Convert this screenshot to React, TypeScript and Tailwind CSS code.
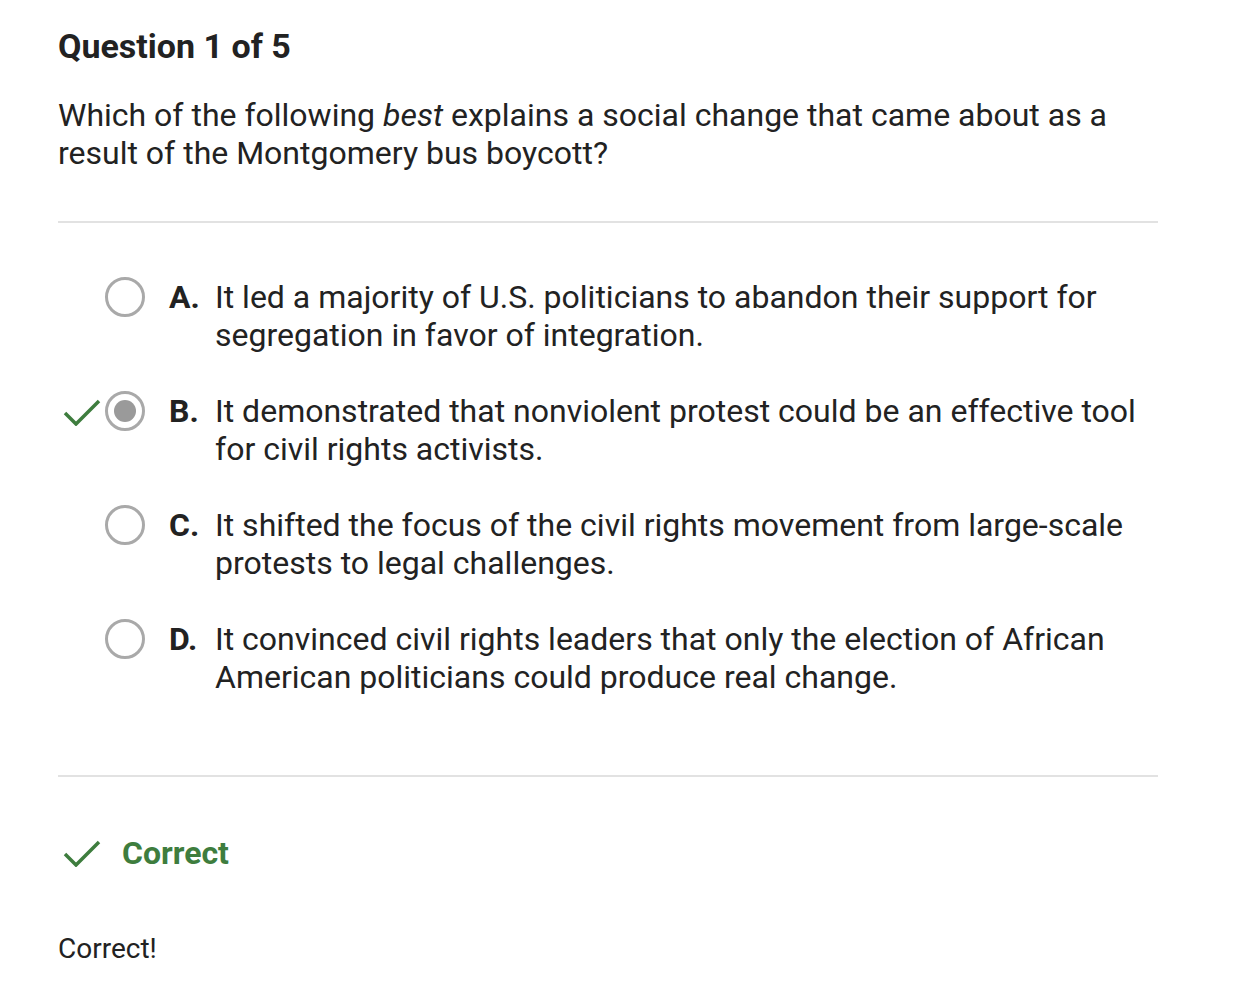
import React from "react"

type Option = {
  letter: string
  text: string
  selected?: boolean
  correct?: boolean
}

const OPTIONS: Option[] = [
  { letter: "A.", text: "It led a majority of U.S. politicians to abandon their support for segregation in favor of integration." },
  { letter: "B.", text: "It demonstrated that nonviolent protest could be an effective tool for civil rights activists.", selected: true, correct: true },
  { letter: "C.", text: "It shifted the focus of the civil rights movement from large-scale protests to legal challenges." },
  { letter: "D.", text: "It convinced civil rights leaders that only the election of African American politicians could produce real change." },
]

function Check({ className }: { className?: string }) {
  return (
    <svg viewBox="0 0 38 28" className={className} fill="none">
      <path d="M2 15 L13 26 L36 3" stroke="#3e7d3e" strokeWidth="3.5" />
    </svg>
  )
}

function Radio({ selected }: { selected?: boolean }) {
  return (
    <div className="flex h-[40px] w-[40px] shrink-0 items-center justify-center rounded-full border-[3px] border-[#a9a9a9] bg-white">
      {selected && <div className="h-[22px] w-[22px] rounded-full bg-[#9a9a9a]" />}
    </div>
  )
}

export default function App() {
  return (
    <div className="min-h-[990px] bg-white text-[#222] [font-family:Roboto,'Liberation_Sans',sans-serif]">
      <div className="w-[1158px] pl-[58px] pt-[26px]">
        <h1 className="text-[34px] font-bold leading-[40px]">Question 1 of 5</h1>
        <p className="mt-[30px] text-[32px] leading-[38px]">
          Which of the following <em>best</em> explains a social change that came about as a result of the Montgomery bus boycott?
        </p>
        <div className="mt-[49px] h-[2px] bg-[#e2e2e2]" />

        <div className="mt-[55px] flex flex-col gap-[38px]">
          {OPTIONS.map((o) => (
            <div key={o.letter} className="flex items-start">
              <div className="flex w-[47px] shrink-0 justify-start pl-[5px] pt-[6px]">
                {o.correct && <Check className="h-[28px] w-[38px]" />}
              </div>
              <div className="-mt-[1px]">
                <Radio selected={o.selected} />
              </div>
              <div className="ml-[24px] flex text-[32px] leading-[38px]">
                <span className="w-[46px] shrink-0 font-bold">{o.letter}</span>
                <span>{o.text}</span>
              </div>
            </div>
          ))}
        </div>

        <div className="mt-[79px] h-[2px] bg-[#e2e2e2]" />

        <div className="mt-[57px] flex items-center pl-[5px]">
          <Check className="h-[28px] w-[38px]" />
          <span className="ml-[21px] text-[32px] font-bold leading-[38px] text-[#3e7d3e]">Correct</span>
        </div>
        <p className="mt-[61px] text-[28px] leading-[32px]">Correct!</p>
      </div>
    </div>
  )
}
